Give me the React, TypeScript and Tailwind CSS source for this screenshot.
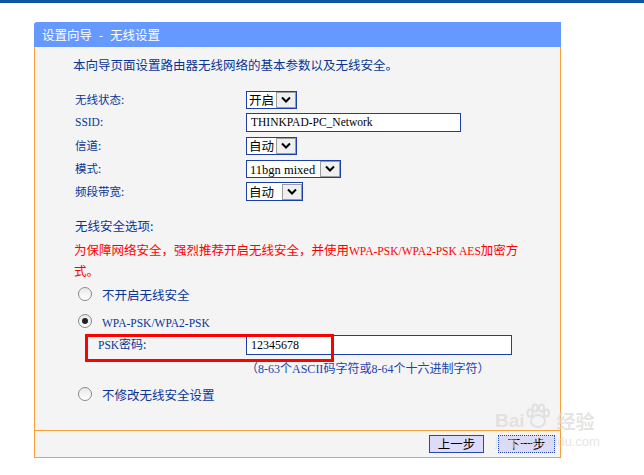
import React from "react";

const Chevron = () => (
  <svg width="10" height="7" viewBox="0 0 10 7">
    <path d="M1 1.5 L5 5.5 L9 1.5" stroke="#000" strokeWidth="2" fill="none" />
  </svg>
);

const DropBtn = () => (
  <div className="w-[20px] h-[16px] border border-[#9c9c9c] bg-[#efefef] flex items-center justify-center">
    <Chevron />
  </div>
);

const Radio = ({ checked }: { checked?: boolean }) => (
  <div className="w-[14px] h-[14px] rounded-full border border-[#8a8a8a] bg-gradient-to-b from-[#e8e8e8] to-white flex items-center justify-center">
    {checked && <div className="w-[6px] h-[6px] rounded-full bg-[#222]" />}
  </div>
);

const Lat = ({ children, cls }: { children: React.ReactNode; cls?: string }) => (
  <span className={"font-['Liberation_Serif',serif] " + (cls ?? "text-[11.5px]")}>{children}</span>
);

export default function App() {
  return (
    <div className="w-[644px] h-[475px] bg-white relative overflow-hidden font-['Noto_Sans_CJK_SC',sans-serif] text-[#0a3595]">
      <div className="h-[3px] bg-[#0c55a5]" />
      <div className="ml-[34px] mt-[19px] w-[527px] relative">
        {/* Title bar */}
        <div className="h-[25px] bg-[#6699ff] rounded-tl-[3px] flex items-center pl-[8px] text-white text-[12.5px] leading-[23px]">
          <span>设置向导</span>
          <span className="inline-block w-[18px] text-center">-</span>
          <span>无线设置</span>
        </div>
        {/* Body */}
        <div className="h-[383px] border-x border-[#f7a03a] bg-[#f4f4f4] flex flex-col">
          <div className="mt-[8px] pl-[38px] h-[19px] leading-[19px] text-[12.5px]">
            本向导页面设置路由器无线网络的基本参数以及无线安全。
          </div>
          <div className="mt-[14px] flex flex-col">
            <div className="h-[23px] flex items-center">
              <div className="w-[211px] pl-[40px] text-[11.5px]">无线状态:</div>
              <div className="w-[51px] h-[18px] border border-[#1b3fa6] bg-white flex items-center text-black text-[12.5px]">
                <span className="flex-1 pl-[2px] leading-[16px]">开启</span>
                <DropBtn />
              </div>
            </div>
            <div className="h-[23px] flex items-center">
              <div className="w-[211px] pl-[40px] text-[11.5px]">
                <Lat cls="text-[11.5px]">SSID</Lat>:
              </div>
              <div className="w-[215px] h-[19px] border border-[#1b3fa6] bg-white flex items-center pl-[4px] text-black">
                <Lat cls="text-[11.5px]">THINKPAD-PC_Network</Lat>
              </div>
            </div>
            <div className="h-[23px] flex items-center">
              <div className="w-[211px] pl-[40px] text-[11.5px]">信道:</div>
              <div className="w-[51px] h-[18px] border border-[#1b3fa6] bg-white flex items-center text-black text-[12.5px]">
                <span className="flex-1 pl-[2px] leading-[16px]">自动</span>
                <DropBtn />
              </div>
            </div>
            <div className="h-[23px] flex items-center">
              <div className="w-[211px] pl-[40px] text-[11.5px]">模式:</div>
              <div className="w-[95px] h-[18px] border border-[#1b3fa6] bg-white flex items-center text-black">
                <span className="flex-1 pl-[3px] leading-[16px]">
                  <Lat cls="text-[12.5px]">11bgn mixed</Lat>
                </span>
                <DropBtn />
              </div>
            </div>
            <div className="h-[23px] flex items-center">
              <div className="w-[211px] pl-[40px] text-[11.5px]">频段带宽:</div>
              <div className="w-[57px] h-[19px] border border-[#1b3fa6] bg-white flex items-center text-black text-[12.5px]">
                <span className="flex-1 pl-[2px] leading-[16px]">自动</span>
                <DropBtn />
              </div>
            </div>
          </div>
          <div className="mt-[12px] pl-[40px] h-[21px] leading-[21px] text-[12.5px]">无线安全选项:</div>
          <div className="mt-[4px] pl-[39px] text-[12.5px] leading-[19px] text-[#ff0000]">
            为保障网络安全，强烈推荐开启无线安全，并使用<Lat cls="text-[11.5px]">WPA-PSK/WPA2-PSK AES</Lat>加密方
            <br />
            式。
          </div>
          <div className="mt-[1px] h-[26px] flex items-center pl-[43px]">
            <Radio />
            <span className="ml-[10px] text-[12.5px] leading-[19px]">不开启无线安全</span>
          </div>
          <div className="h-[27px] flex items-center pl-[43px]">
            <Radio checked />
            <span className="ml-[10px]">
              <Lat cls="text-[11.5px]">WPA-PSK/WPA2-PSK</Lat>
            </span>
          </div>
          <div className="h-[22px] flex items-center">
            <div className="w-[211px] pl-[63px] text-[12px]">
              <Lat cls="text-[11.5px]">PSK</Lat>密码:
            </div>
            <div className="w-[266px] h-[20px] border border-[#1b3fa6] bg-white flex items-center pl-[4px] text-black">
              <Lat cls="text-[12px]">12345678</Lat>
            </div>
          </div>
          <div className="mt-[2px] h-[19px] leading-[19px] pl-[211px] text-[12px] text-[#1c44b0]">
            （<Lat cls="text-[12px]">8-63</Lat>个<Lat cls="text-[12px]">ASCII</Lat>码字符或<Lat cls="text-[12px]">8-64</Lat>个十六进制字符）
          </div>
          <div className="mt-[4px] h-[26px] flex items-center pl-[43px]">
            <Radio />
            <span className="ml-[10px] text-[12.5px] leading-[19px]">不修改无线安全设置</span>
          </div>
        </div>
        {/* Footer */}
        <div className="h-[28px] border border-[#f7a03a] bg-[#f4f4f4] flex items-center justify-end pr-[5px] gap-[14px] text-black text-[12.5px]">
          <div className="w-[55px] h-[18px] border border-[#2846b4] bg-[#dcdcfa] flex items-center justify-center leading-[16px]">
            上一步
          </div>
          <div className="w-[57px] h-[18px] border border-dotted border-[#2846b4] bg-[#dcdcfa] flex items-center justify-center leading-[16px]">
            下一步
          </div>
        </div>
        {/* Red annotation box */}
        <div className="absolute left-[51px] top-[312px] w-[249px] h-[28px] border-[3px] border-[#ff0000]" />
      </div>
      {/* Watermark */}
      <div className="absolute left-[495px] top-[403px] w-[140px] h-[60px] pointer-events-none">
        <div className="flex items-end">
          <span className="font-['Liberation_Sans',sans-serif] font-bold text-[19px] leading-[20px] text-[#d9d9d9]/70">Bai</span>
          <svg width="26" height="26" viewBox="0 0 26 26" className="mb-[2px]">
            <g fill="none" stroke="#dcdcdc" strokeWidth="2" opacity="0.8">
              <ellipse cx="13" cy="18" rx="7" ry="6" />
              <ellipse cx="5" cy="10" rx="2.5" ry="3.5" />
              <ellipse cx="10" cy="5" rx="2.5" ry="3.5" />
              <ellipse cx="16.5" cy="5" rx="2.5" ry="3.5" />
              <ellipse cx="21.5" cy="10" rx="2.5" ry="3.5" />
            </g>
          </svg>
          <span className="ml-[6px] font-bold text-[19px] leading-[20px] text-[#d9d9d9]/70">经验</span>
        </div>
        <div className="mt-[4px] font-['Liberation_Sans',sans-serif] text-[13px] leading-[13px] text-[#d9d9d9]/70">jingyan.baidu.com</div>
      </div>
    </div>
  );
}
